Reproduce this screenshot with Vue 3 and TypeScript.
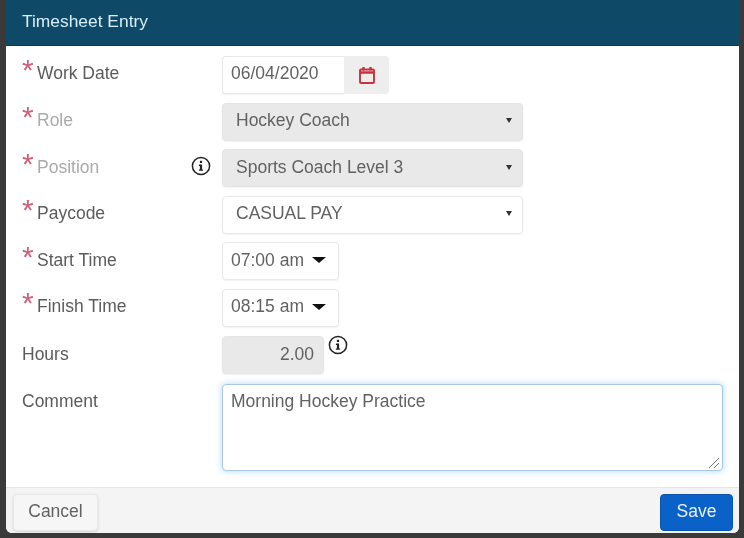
<template>
  <div class="backdrop">
    <div class="modal">
      <div class="modal-header">Timesheet Entry</div>

      <div class="modal-body">
        <div class="row">
          <label class="label label-high"><span class="req">*</span>Work Date</label>
          <div class="date-group">
            <div class="control date-input">06/04/2020</div>
            <div class="date-addon">
              <svg width="18" height="19" viewBox="0 0 18 19" fill="none" stroke="#c9323c">
                <rect x="2" y="3.5" width="14" height="13.5" rx="1" stroke-width="1.9" />
                <path d="M2 6.5h14" stroke-width="2.4" />
                <path d="M5.5 1v3.5M12.5 1v3.5" stroke-width="2.4" />
              </svg>
            </div>
          </div>
        </div>

        <div v-for="s in selects" :key="s.label" class="row">
          <label class="label" :class="{ muted: s.disabled }"><span class="req">*</span>{{ s.label }}</label>
          <svg v-if="s.info" class="info info-left" width="20" height="20" viewBox="0 0 20 20">
            <circle cx="10" cy="10" r="8.6" fill="none" stroke="#222" stroke-width="1.5" />
            <rect x="8.9" y="4.8" width="2.2" height="2.2" fill="#222" />
            <path d="M7.9 8.6h3.2v4.8h1v1.4H7.9v-1.4h1v-3.4h-1z" fill="#222" />
          </svg>
          <div class="control select" :class="{ disabled: s.disabled }">
            <span>{{ s.value }}</span>
            <span class="select-arrow"></span>
          </div>
        </div>

        <div v-for="t in times" :key="t.label" class="row">
          <label class="label"><span class="req">*</span>{{ t.label }}</label>
          <div class="control time">
            <span>{{ t.value }}</span>
            <span class="caret"></span>
          </div>
        </div>

        <div class="row">
          <label class="label label-plain">Hours</label>
          <div class="control hours">2.00</div>
          <svg class="info info-right" width="20" height="20" viewBox="0 0 20 20">
            <circle cx="10" cy="10" r="8.6" fill="none" stroke="#222" stroke-width="1.5" />
            <rect x="8.9" y="4.8" width="2.2" height="2.2" fill="#222" />
            <path d="M7.9 8.6h3.2v4.8h1v1.4H7.9v-1.4h1v-3.4h-1z" fill="#222" />
          </svg>
        </div>

        <div class="row row-comment">
          <label class="label label-plain">Comment</label>
          <div class="comment">
            Morning Hockey Practice
            <svg class="grip" width="12" height="12" viewBox="0 0 12 12" stroke="#777" stroke-width="1">
              <path d="M1 11 11 1M6 11l5-5" />
            </svg>
          </div>
        </div>
      </div>

      <div class="modal-footer">
        <button class="btn btn-cancel">Cancel</button>
        <button class="btn btn-save">Save</button>
      </div>
    </div>
  </div>
</template>

<script setup lang="ts">
interface SelectRow {
  label: string
  value: string
  disabled: boolean
  info?: boolean
}

const selects: SelectRow[] = [
  { label: 'Role', value: 'Hockey Coach', disabled: true },
  { label: 'Position', value: 'Sports Coach Level 3', disabled: true, info: true },
  { label: 'Paycode', value: 'CASUAL PAY', disabled: false },
]

const times = [
  { label: 'Start Time', value: '07:00 am' },
  { label: 'Finish Time', value: '08:15 am' },
]
</script>

<style>
html,
body {
  margin: 0;
  background: #3a3a3a;
}
</style>

<style scoped>
.backdrop {
  width: 744px;
  height: 538px;
  overflow: hidden;
  box-sizing: border-box;
  padding: 0 5px 5px 6px;
  background: #3a3a3a;
  font-family: 'Liberation Sans', Arial, sans-serif;
  font-size: 17.5px;
  color: #626262;
  filter: blur(0.5px);
}

.modal {
  height: 100%;
  display: flex;
  flex-direction: column;
  background: #fff;
  border-radius: 0 0 6px 6px;
  overflow: hidden;
}

.modal-header {
  height: 46px;
  flex: none;
  box-sizing: border-box;
  padding: 11px 16px 0;
  background: #0e4a68;
  border-bottom: 1px solid #0b3a52;
  color: #d8eef8;
  font-size: 17.4px;
}

.modal-body {
  flex: 1;
  display: flex;
  flex-direction: column;
  gap: 8.6px;
  padding: 10px 16px 0;
}

.row {
  position: relative;
  display: flex;
  align-items: center;
  height: 38px;
}

.row-comment {
  height: 87px;
  margin-top: 2px;
  align-items: flex-start;
}

.label {
  width: 200px;
  flex: none;
  margin-bottom: 3px;
  color: #5c5c5c;
}

.label-high {
  margin-bottom: 4px;
}

.label-plain {
  margin-bottom: 0;
}

.label.muted {
  color: #aaa;
}

.row-comment .label {
  padding-top: 7px;
}

.req {
  display: inline-block;
  width: 15px;
  color: #d0607a;
  font-size: 30px;
  line-height: 16px;
  vertical-align: -1px;
}

.control {
  box-sizing: border-box;
  height: 38px;
  padding-bottom: 2px;
  display: flex;
  align-items: center;
  border: 1px solid #e8e8e8;
  border-radius: 4px;
  background: #fff;
  box-shadow: 0 1px 2px rgba(0, 0, 0, 0.06);
}

.date-group {
  display: flex;
  height: 38px;
}

.date-input {
  width: 122px;
  padding-left: 8px;
  padding-bottom: 3px;
  border-radius: 4px 0 0 4px;
  border-right: none;
}

.date-addon {
  width: 45px;
  display: flex;
  align-items: center;
  justify-content: center;
  background: #eee;
  border-radius: 0 4px 4px 0;
}

.select {
  width: 301px;
  padding-left: 13px;
  padding-right: 10px;
  justify-content: space-between;
}

.select.disabled {
  background: #e9e9e9;
  border-color: #e4e4e4;
}

.select-arrow {
  width: 0;
  height: 0;
  border-left: 3px solid transparent;
  border-right: 3px solid transparent;
  border-top: 5px solid #333;
}

.time {
  width: 117px;
  padding-left: 8px;
  gap: 8px;
}

.caret {
  width: 0;
  height: 0;
  border-left: 7px solid transparent;
  border-right: 7px solid transparent;
  border-top: 6px solid #111;
}

.hours {
  width: 102px;
  padding-bottom: 0;
  padding-right: 9px;
  justify-content: flex-end;
  background: #e9e9e9;
  border-color: #e6e6e6;
}

.info {
  position: absolute;
}

.info-left {
  left: 169px;
  top: 7px;
}

.info-right {
  left: 306px;
  top: -1px;
}

.comment {
  position: relative;
  box-sizing: border-box;
  width: 502px;
  height: 87px;
  padding: 6px 8px;
  background: #fff;
  border: 1px solid #a8c8ea;
  border-radius: 4px;
  box-shadow: 0 0 6px rgba(102, 175, 233, 0.5);
}

.grip {
  position: absolute;
  right: 2px;
  bottom: 1px;
}

.modal-footer {
  height: 46px;
  flex: none;
  box-sizing: border-box;
  display: flex;
  align-items: center;
  justify-content: space-between;
  padding: 4px 6px 0 7px;
  background: #f4f4f4;
  border-top: 1px solid #e6e6e6;
}

.btn {
  height: 37px;
  padding-bottom: 3px;
  font-family: inherit;
  font-size: 17.5px;
  border-radius: 4px;
}

.btn-cancel {
  width: 85px;
  color: #626262;
  background: #f6f6f6;
  border: 1px solid #e8e8e8;
  box-shadow: 0 1px 3px rgba(0, 0, 0, 0.12);
}

.btn-save {
  width: 73px;
  color: #e8f2ff;
  background: #0a62c9;
  border: 1px solid #0a55b0;
}
</style>
